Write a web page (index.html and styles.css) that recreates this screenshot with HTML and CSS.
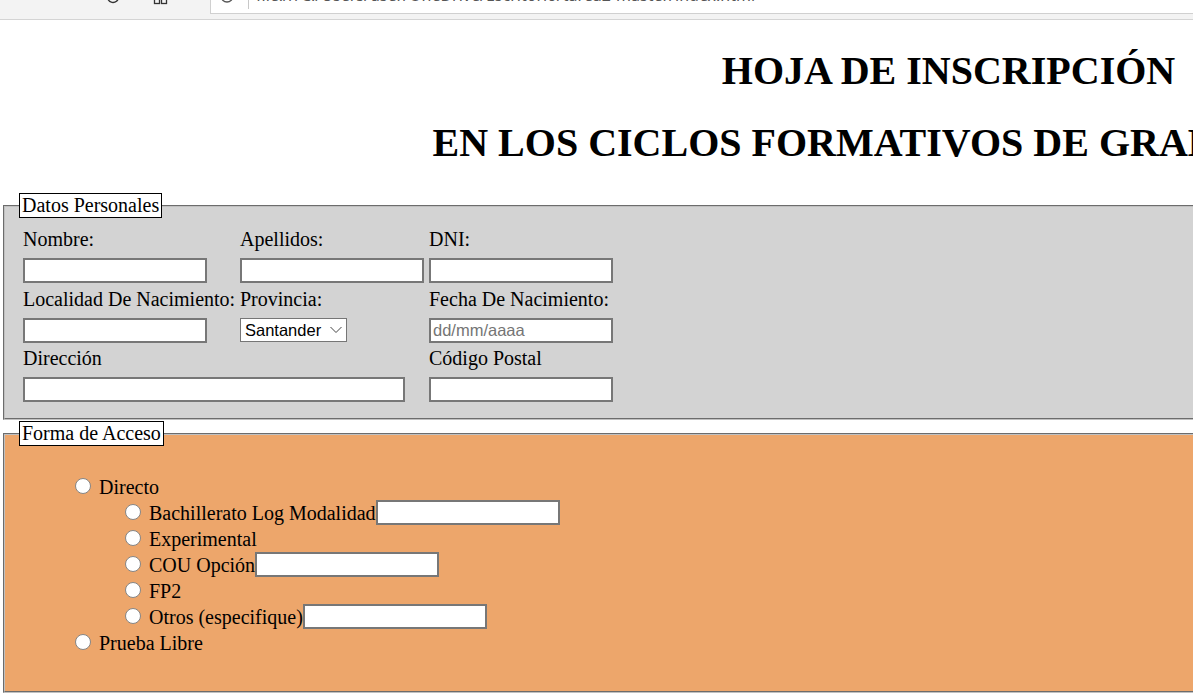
FILE: index.html
```html
<!DOCTYPE html>
<html lang="es">
<head>
<meta charset="utf-8">
<title>Hoja de inscripción</title>
<link rel="stylesheet" href="styles.css">
</head>
<body>
<div class="browser">
  <svg class="ico back" width="20" height="20" viewBox="0 0 20 20"><path d="M17 10H4M10 4L4 10L10 16" fill="none" stroke="#b5b5b5" stroke-width="1.3"/></svg>
  <svg class="ico fwd" width="20" height="20" viewBox="0 0 20 20"><path d="M3 10H16M10 4L16 10L10 16" fill="none" stroke="#b5b5b5" stroke-width="1.3"/></svg>
  <svg class="ico reload" width="20" height="20" viewBox="0 0 20 20"><path d="M15.5 10A5.5 5.5 0 1 1 13 5.4" fill="none" stroke="#333" stroke-width="1.4"/><path d="M12 2.5L15.5 3.5L14.5 7" fill="none" stroke="#333" stroke-width="1.4"/></svg>
  <svg class="ico tabs" width="20" height="20" viewBox="0 0 20 20"><rect x="3.5" y="9.5" width="5" height="7" fill="none" stroke="#333" stroke-width="1.3"/><rect x="10.5" y="9.5" width="5" height="7" fill="none" stroke="#333" stroke-width="1.3"/></svg>
  <div class="omnibox">
    <svg class="ico info" width="20" height="20" viewBox="0 0 20 20"><circle cx="10" cy="10" r="6" fill="none" stroke="#555" stroke-width="1.3"/></svg>
    <span class="sep"></span>
    <span class="url">file:///C:/Users/user/OneDrive/Escritorio/tarea2-master/index.html</span>
  </div>
</div>

<div class="page">
  <h1 class="title">HOJA DE INSCRIPCIÓN</h1>
  <h1 class="title">EN LOS CICLOS FORMATIVOS DE GRADO SUPERIOR</h1>

  <form>
    <fieldset class="box personal">
      <legend>Datos Personales</legend>
      <div class="fields">
        <div class="field"><label>Nombre:</label><input class="txt" type="text"></div>
        <div class="field"><label>Apellidos:</label><input class="txt" type="text"></div>
        <div class="field"><label>DNI:</label><input class="txt" type="text"></div>

        <div class="field"><label>Localidad De Nacimiento:</label><input class="txt" type="text"></div>
        <div class="field"><label>Provincia:</label>
          <span class="select-wrap">
            <select class="sel"><option>Santander</option><option>Madrid</option></select>
            <svg class="chev" width="12" height="8" viewBox="0 0 12 8"><path d="M0.5 1L6 6.5L11.5 1" fill="none" stroke="#444" stroke-width="1"/></svg>
          </span>
        </div>
        <div class="field"><label>Fecha De Nacimiento:</label><input class="txt" type="text" placeholder="dd/mm/aaaa"></div>

        <div class="field wide"><label>Dirección</label><input class="txt long" type="text"></div>
        <div class="field"><label>Código Postal</label><input class="txt" type="text"></div>
      </div>
    </fieldset>

    <fieldset class="box acceso">
      <legend>Forma de Acceso</legend>
      <ul class="options">
        <li><input class="radio" type="radio" name="acceso"> Directo
          <ul class="sub">
            <li><input class="radio" type="radio" name="directo"> Bachillerato Log Modalidad<input class="txt" type="text"></li>
            <li><input class="radio" type="radio" name="directo"> Experimental</li>
            <li><input class="radio" type="radio" name="directo"> COU Opción<input class="txt" type="text"></li>
            <li><input class="radio" type="radio" name="directo"> FP2</li>
            <li><input class="radio" type="radio" name="directo"> Otros (especifique)<input class="txt" type="text"></li>
          </ul>
        </li>
        <li><input class="radio" type="radio" name="acceso"> Prueba Libre</li>
      </ul>
    </fieldset>
  </form>
</div>
</body>
</html>
```

FILE: styles.css
```css
html, body {
  margin: 0;
  padding: 0;
  overflow: hidden;
  background: #fff;
}

body {
  font-family: "Liberation Serif", "Times New Roman", serif;
  font-size: 20px;
  color: #000;
}

/* ---- browser chrome strip ---- */
.browser {
  display: flex;
  height: 19px;
  background: #f3f3f3;
  border-bottom: 1px solid #d4d4d4;
  overflow: hidden;
}

.ico {
  flex: none;
  display: block;
}

.back { margin: -17px 0 0 3px; }
.fwd { margin: -17px 0 0 10px; }
.reload { margin: -13px 0 0 50px; }
.tabs { margin: -13px 0 0 28px; }

.omnibox {
  flex: 1;
  display: flex;
  height: 13px;
  margin-left: 39px;
  background: #fff;
  border-left: 1px solid #d0d0d0;
  border-bottom: 1px solid #d0d0d0;
  overflow: hidden;
}

.info { margin: -14px 0 0 6px; }

.sep {
  flex: none;
  width: 1px;
  height: 9px;
  margin-left: 11px;
  background: #c8c8c8;
}

.url {
  margin: -14px 0 0 7px;
  font-family: "Noto Sans", "Liberation Sans", sans-serif;
  font-size: 16px;
  line-height: 18px;
  color: #555;
  white-space: nowrap;
}

/* ---- page ---- */
.page {
  width: 1897px;
}

.title {
  font-size: 40px;
  font-weight: bold;
  text-align: center;
  margin: 27px 0 0;
}

.title + .title {
  margin-top: 25px;
  margin-bottom: 27px;
}

form {
  margin: 0;
}

.box {
  margin: 0 3px 1px;
  border: 2px groove #c0c0c0;
  padding: 10px 14px 16px;
  min-width: 0;
}

.box legend {
  background: #fff;
  border: 1px solid #000;
  padding: 0 2px;
  line-height: 23px;
}

.personal {
  background: #d3d3d3;
}

.acceso {
  background: #eda66b;
  padding-top: 8px;
  padding-bottom: 15px;
}

/* ---- datos personales grid ---- */
.fields {
  display: grid;
  grid-template-columns: 212px 184px 184px;
  column-gap: 5px;
  row-gap: 4.5px;
  padding-left: 4px;
}

.field label {
  display: block;
  line-height: 23px;
  height: 23px;
  margin-bottom: 7px;
  white-space: nowrap;
}

.field.wide {
  grid-column: span 2;
}

.txt {
  box-sizing: border-box;
  width: 184px;
  height: 25px;
  margin: 0;
  padding: 1px 2px;
  border: 2px solid #777;
  background: #fff;
  font-family: "Liberation Sans", Arial, sans-serif;
  font-size: 16.5px;
  color: #000;
  vertical-align: baseline;
}

.txt::placeholder {
  color: #757575;
}

.txt.long {
  width: 382px;
}

.select-wrap {
  position: relative;
  display: inline-block;
  width: 107px;
  height: 24px;
}

.sel {
  appearance: none;
  -webkit-appearance: none;
  box-sizing: border-box;
  width: 107px;
  height: 24px;
  margin: 0;
  padding: 0 0 0 4px;
  border: 1px solid #767676;
  border-radius: 0;
  background: #fff;
  font-family: "Liberation Sans", Arial, sans-serif;
  font-size: 16.5px;
  color: #000;
}

.chev {
  position: absolute;
  right: 5px;
  top: 8px;
}

/* ---- forma de acceso list ---- */
.options {
  list-style: none;
  margin: 20px 0;
  padding-left: 50px;
}

.options li {
  line-height: 26px;
}

.options .txt {
  vertical-align: top;
}

.sub {
  list-style: none;
  margin: 0;
  padding-left: 50px;
}

.radio {
  appearance: none;
  -webkit-appearance: none;
  box-sizing: border-box;
  width: 16px;
  height: 16px;
  margin: 4px 3px 0 6px;
  border: 1px solid #858585;
  border-radius: 50%;
  background: #fff;
  vertical-align: baseline;
}
```
